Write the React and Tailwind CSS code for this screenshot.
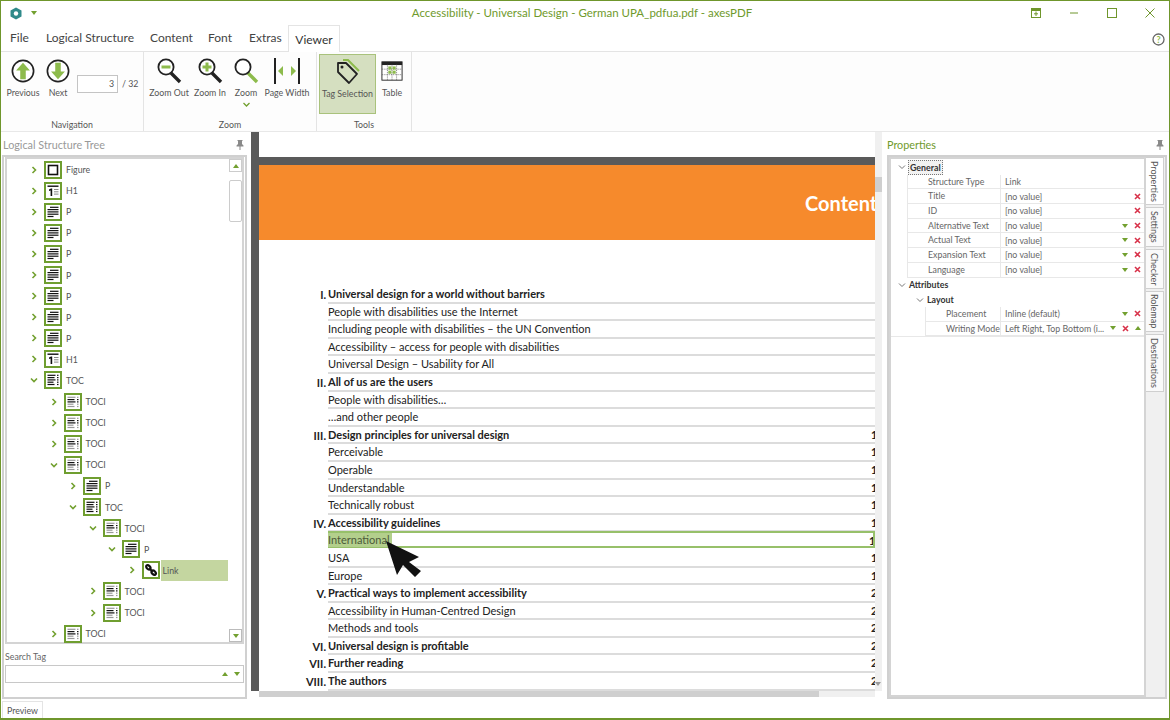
import React from 'react';

const GREEN = '#72a02f';

const treeRows = [
  [0, 'c', 'figure', 'Figure'],
  [0, 'c', 'h1', 'H1'],
  [0, 'c', 'p', 'P'],
  [0, 'c', 'p', 'P'],
  [0, 'c', 'p', 'P'],
  [0, 'c', 'p', 'P'],
  [0, 'c', 'p', 'P'],
  [0, 'c', 'p', 'P'],
  [0, 'c', 'p', 'P'],
  [0, 'c', 'h1', 'H1'],
  [0, 'o', 'toc', 'TOC'],
  [1, 'c', 'toci', 'TOCI'],
  [1, 'c', 'toci', 'TOCI'],
  [1, 'c', 'toci', 'TOCI'],
  [1, 'o', 'toci', 'TOCI'],
  [2, 'c', 'p', 'P'],
  [2, 'o', 'toc', 'TOC'],
  [3, 'o', 'toci', 'TOCI'],
  [4, 'o', 'p', 'P'],
  [5, 'c', 'link', 'Link', true],
  [3, 'c', 'toci', 'TOCI'],
  [3, 'c', 'toci', 'TOCI'],
  [1, 'c', 'toci', 'TOCI'],
];

const docRows = [
  ['I.', 'Universal design for a world without barriers', ''],
  ['', 'People with disabilities use the Internet', ''],
  ['', 'Including people with disabilities – the UN Convention', ''],
  ['', 'Accessibility – access for people with disabilities', ''],
  ['', 'Universal Design – Usability for All', ''],
  ['II.', 'All of us are the users', ''],
  ['', 'People with disabilities…', ''],
  ['', '…and other people', ''],
  ['III.', 'Design principles for universal design', '13'],
  ['', 'Perceivable', '13'],
  ['', 'Operable', '14'],
  ['', 'Understandable', '14'],
  ['', 'Technically robust', '15'],
  ['IV.', 'Accessibility guidelines', '16'],
  ['', 'International', '16', true],
  ['', 'USA', '17'],
  ['', 'Europe', '17'],
  ['V.', 'Practical ways to implement accessibility', '21'],
  ['', 'Accessibility in Human-Centred Design', '21'],
  ['', 'Methods and tools', '22'],
  ['VI.', 'Universal design is profitable', '25'],
  ['VII.', 'Further reading', '26'],
  ['VIII.', 'The authors', '28'],
];

const sideTabs = [
  ['Properties', 'h-[48px]'],
  ['Settings', 'h-[40px]'],
  ['Checker', 'h-[40px]'],
  ['Rolemap', 'h-[41px]'],
  ['Destinations', 'h-[58px]'],
];

function Chevron({ open }) {
  return (
    <svg width="8" height="8" viewBox="0 0 8 8" fill="none" stroke={GREEN} strokeWidth="1.6">
      {open ? <path d="M1 2.5 4 5.5 7 2.5" /> : <path d="M2.5 1 5.5 4 2.5 7" />}
    </svg>
  );
}

function Lines({ rows }) {
  return rows.map((r, i) => <rect key={i} x={r[0]} y={r[1]} width={r[2]} height={r[3] || 1.2} fill={r[4] || '#111'} />);
}

function TagIcon({ type }) {
  return (
    <svg width="18" height="18" viewBox="0 0 18 18" className="shrink-0">
      <rect x="1" y="1" width="16" height="16" fill="#fff" stroke="#6f9e30" strokeWidth="2" />
      {type === 'figure' && <rect x="4.5" y="4.5" width="9" height="9" fill="none" stroke="#111" strokeWidth="1.6" />}
      {type === 'h1' && (
        <>
          <rect x="3.5" y="3.5" width="11" height="1.4" fill="#111" />
          <path d="M5 7.5 7 6.5H8.2V14H6.6V8.4L5 9Z" fill="#111" />
          <Lines rows={[[10, 7, 4.5, 1, '#888'], [10, 9.3, 4.5, 1, '#888'], [10, 11.6, 4.5, 1, '#888']]} />
        </>
      )}
      {type === 'p' && <Lines rows={[[6, 3.7, 8.5], [3.5, 6, 11], [3.5, 8.3, 11], [3.5, 10.6, 11], [3.5, 12.9, 6]]} />}
      {type === 'toc' && (
        <Lines rows={[[3.5, 3.7, 8], [3.5, 6, 7], [3.5, 8.3, 8], [3.5, 10.6, 6], [3.5, 12.9, 7], [13, 3.7, 1.5], [13, 6, 1.5], [13, 8.3, 1.5], [13, 10.6, 1.5], [13, 12.9, 1.5]]} />
      )}
      {type === 'toci' && (
        <Lines rows={[[3.5, 3.7, 8, 1.2, '#999'], [3.5, 6, 7], [3.5, 8.3, 8], [3.5, 10.6, 6, 1.2, '#999'], [3.5, 12.9, 7, 1.2, '#999'], [13, 3.7, 1.5, 1.2, '#999'], [13, 6, 1.5], [13, 8.3, 1.5], [13, 10.6, 1.5, 1.2, '#999'], [13, 12.9, 1.5, 1.2, '#999']]} />
      )}
      {type === 'link' && (
        <g fill="none" stroke="#111" strokeWidth="2.2">
          <ellipse cx="6.3" cy="6.3" rx="2.5" ry="1.7" transform="rotate(45 6.3 6.3)" />
          <ellipse cx="11.7" cy="11.7" rx="2.5" ry="1.7" transform="rotate(45 11.7 11.7)" />
          <path d="M7.5 7.5 10.5 10.5" />
        </g>
      )}
    </svg>
  );
}

function Pin() {
  return (
    <svg width="8" height="10" viewBox="0 0 8 10" fill="#8a8a8a">
      <path d="M1.5 0h5v1H6v3l1.5 1.5V6.5H4.5V10h-1V6.5H.5v-1L2 4V1h-.5z" />
    </svg>
  );
}

function Tri({ up, color = GREEN }) {
  return (
    <svg width="6" height="4" viewBox="0 0 6 4" fill={color}>
      {up ? <path d="M0 4 3 0 6 4Z" /> : <path d="M0 0H6L3 4Z" />}
    </svg>
  );
}

function RedX() {
  return (
    <svg width="7" height="7" viewBox="0 0 7 7" stroke="#d8324a" strokeWidth="1.6">
      <path d="M1 1 6 6M6 1 1 6" />
    </svg>
  );
}

function CircleArrow({ down }) {
  return (
    <svg width="24" height="24" viewBox="0 0 26 26">
      <circle cx="13" cy="13" r="11.5" fill="#fff" stroke="#222" strokeWidth="1.8" />
      <g transform={down ? 'rotate(180 13 13)' : undefined} fill="#8dbb4c">
        <path d="M13 4 20.5 12.5H16V22H10V12.5H5.5Z" />
      </g>
    </svg>
  );
}

function Lens({ kind }) {
  return (
    <svg width="30" height="30" viewBox="0 0 30 30">
      <path d="M17 17 26 26" stroke={kind === 'plain' ? '#8dbb4c' : '#222'} strokeWidth="3.4" />
      <circle cx="12" cy="11" r="7.6" fill="#fff" stroke="#222" strokeWidth="1.8" />
      {kind !== 'plain' && <rect x="7.5" y="9.5" width="9" height="3" fill="#8dbb4c" />}
      {kind === 'plus' && <rect x="10.5" y="6.5" width="3" height="9" fill="#8dbb4c" />}
    </svg>
  );
}

function PageWidthIcon() {
  return (
    <svg width="30" height="28" viewBox="0 0 30 28">
      <rect x="2" y="1" width="2" height="26" fill="#222" />
      <rect x="26" y="1" width="2" height="26" fill="#222" />
      <path d="M6 14 11 9V19Z" fill="#8dbb4c" />
      <path d="M24 14 19 9V19Z" fill="#8dbb4c" />
    </svg>
  );
}

function TagSelIcon() {
  return (
    <svg width="26" height="28" viewBox="0 0 26 28">
      <path d="M8 2H13L24 13" fill="none" stroke="#8dbb4c" strokeWidth="2" />
      <path d="M3 5H11L22 16 14 25 3 14Z" fill="#d5dfc0" stroke="#222" strokeWidth="1.8" strokeLinejoin="round" />
      <circle cx="7" cy="9" r="1.5" fill="#222" />
    </svg>
  );
}

function TableIcon() {
  return (
    <svg width="22" height="22" viewBox="0 0 24 24">
      <rect x="1" y="2" width="22" height="20" fill="#fff" stroke="#222" strokeWidth="1" />
      <rect x="1" y="2" width="22" height="3.5" fill="#222" />
      <path d="M1 10H23M1 16H23M7 5V22M12 5V22M17 5V22" stroke="#555" strokeWidth=".8" strokeDasharray="1 1" />
      <rect x="8" y="7" width="3.4" height="3.4" fill="#8dbb4c" />
      <rect x="12.6" y="7" width="3.4" height="3.4" fill="#8dbb4c" />
      <rect x="8" y="11.6" width="3.4" height="3.4" fill="#8dbb4c" />
      <rect x="12.6" y="11.6" width="3.4" height="3.4" fill="#8dbb4c" />
    </svg>
  );
}

function RibbonButton({ icon, label, className, children }) {
  return (
    <div className={`flex flex-col items-center shrink-0 ${className}`}>
      <div className="h-[33px] flex items-center justify-center">{icon}</div>
      <div className="text-[8.8px] leading-[12px] text-[#555] whitespace-nowrap">{label}</div>
      {children}
    </div>
  );
}

function RibbonGroup({ label, width, children }) {
  return (
    <div className={`flex flex-col h-full border-r border-[#e4e4e4] ${width}`}>
      <div className="flex flex-1 pt-[2px]">{children}</div>
      <div className="h-[12px] text-center text-[8.8px] leading-[12px] text-[#555]">{label}</div>
    </div>
  );
}

function PropRow({ label, value, sub, down, x = true, writing }) {
  return (
    <div className={`flex h-[14.7px] items-center ${sub ? 'pl-[34px]' : 'pl-[16px]'}`}>
      <div className="flex flex-1 min-w-0 h-full items-center border-l border-b border-[#e8e8e8]">
        <div className={`h-full shrink-0 pl-[20px] border-r border-[#e8e8e8] leading-[13px] whitespace-nowrap ${sub ? 'w-[75px]' : 'w-[93px]'}`}>{label}</div>
        <div className="flex-1 min-w-0 pl-[4px] leading-[13px] whitespace-nowrap">{value}</div>
        <div className="flex items-center gap-[6px] pr-[3px]">
          {down && <Tri />}
          {x && <RedX />}
          {writing && <Tri up />}
        </div>
      </div>
    </div>
  );
}

function PropHead({ label, sub, focus }) {
  return (
    <div className={`flex h-[14.7px] items-center ${sub ? 'pl-[25px]' : 'pl-[7px]'}`}>
      <svg width="8" height="8" viewBox="0 0 8 8" fill="none" stroke="#777" strokeWidth="1"><path d="M1 2.5 4 5.5 7 2.5" /></svg>
      <span className={`ml-[2px] px-[1px] font-bold leading-[13px] text-[#333] ${focus ? 'border border-dotted border-[#777] bg-[#f2f2f2]' : ''}`}>{label}</span>
    </div>
  );
}

export default function App() {
  return (
    <div className="relative flex flex-col w-[1170px] h-[720px] overflow-hidden bg-white border border-b-2 border-[#6f962c] font-['Lato',sans-serif]">
      {/* title bar */}
      <div className="flex items-center h-[24px] shrink-0">
        <div className="flex items-center w-[60px] pl-[9px] gap-[9px]">
          <svg width="12" height="13" viewBox="0 0 12 13">
            <path d="M6 .5 11.5 3.5V9.5L6 12.5.5 9.5V3.5Z" fill="#2f8a8a" />
            <circle cx="6" cy="6.5" r="2.2" fill="#fff" />
          </svg>
          <Tri />
        </div>
        <div className="flex-1 pl-[86px] text-center text-[11.5px] text-[#6f9a2c] whitespace-nowrap">Accessibility - Universal Design - German UPA_pdfua.pdf - axesPDF</div>
        <div className="flex items-center w-[152px] h-full">
          <div className="w-[38px] flex justify-center">
            <svg width="10" height="10" viewBox="0 0 10 10" fill="none" stroke="#6f962c"><rect x=".5" y=".5" width="9" height="9" /><rect x="0" y="0" width="10" height="2.5" fill="#6f962c" /><path d="M5 3.5V8M3 5.8H7" /></svg>
          </div>
          <div className="w-[38px] flex justify-center">
            <svg width="10" height="10" viewBox="0 0 10 10" stroke="#6f962c"><path d="M1 5H9" /></svg>
          </div>
          <div className="w-[38px] flex justify-center">
            <svg width="10" height="10" viewBox="0 0 10 10" fill="none" stroke="#6f962c"><rect x=".5" y=".5" width="9" height="9" /></svg>
          </div>
          <div className="w-[38px] flex justify-center">
            <svg width="10" height="10" viewBox="0 0 10 10" stroke="#6f962c"><path d="M.5.5 9.5 9.5M9.5.5.5 9.5" /></svg>
          </div>
        </div>
      </div>

      {/* tabs */}
      <div className="flex items-end h-[27px] shrink-0 border-b border-[#e4e4e4] text-[12px] text-[#444]">
        <div className="pl-[9px] w-[45px] pb-[4px]">File</div>
        <div className="w-[104px] pb-[4px]">Logical Structure</div>
        <div className="w-[58px] pb-[4px]">Content</div>
        <div className="w-[41px] pb-[4px]">Font</div>
        <div className="w-[39px] pb-[4px]">Extras</div>
        <div className="w-[52px] h-[27px] mb-[-1px] pt-[5px] text-center bg-white border border-b-0 border-[#e4e4e4] text-[#333]">Viewer</div>
        <div className="flex-1 flex justify-end pr-[4px] pb-[5px]">
          <svg width="13" height="13" viewBox="0 0 13 13">
            <circle cx="6.5" cy="6.5" r="5.5" fill="#fff" stroke="#666" strokeWidth="1.3" />
            <text x="6.5" y="9.8" textAnchor="middle" fontSize="9" fontWeight="700" fill="#8dbb4c">?</text>
          </svg>
        </div>
      </div>

      {/* ribbon */}
      <div className="flex h-[80px] shrink-0 border-b border-[#e8e8e8] bg-[#fdfdfd]">
        <RibbonGroup label="Navigation" width="w-[143px]">
          <RibbonButton className="w-[44px]" icon={<CircleArrow />} label="Previous" />
          <RibbonButton className="w-[26px]" icon={<CircleArrow down />} label="Next" />
          <div className="flex items-center h-[20px] mt-[20px] ml-[6px] text-[8.8px] text-[#555]">
            <div className="w-[41px] h-[18px] border border-[#c4c4c4] bg-white text-right pr-[3px] leading-[16px]">3</div>
            <span className="ml-[4px] whitespace-nowrap">/ 32</span>
          </div>
        </RibbonGroup>
        <RibbonGroup label="Zoom" width="w-[173px]">
          <RibbonButton className="w-[50px]" icon={<Lens kind="minus" />} label="Zoom Out" />
          <RibbonButton className="w-[32px]" icon={<Lens kind="plus" />} label="Zoom In" />
          <RibbonButton className="w-[40px]" icon={<Lens kind="plain" />} label="Zoom">
            <svg width="7" height="5" viewBox="0 0 7 5" fill="none" stroke={GREEN} strokeWidth="1.3" className="mt-[3px]"><path d="M.5 1 3.5 4 6.5 1" /></svg>
          </RibbonButton>
          <RibbonButton className="w-[42px]" icon={<PageWidthIcon />} label="Page Width" />
        </RibbonGroup>
        <RibbonGroup label="Tools" width="w-[95px]">
          <div className="ml-[2px] w-[57px] h-[60px] bg-[#d5dfc0] border border-[#a9c27c]">
            <RibbonButton className="w-full" icon={<TagSelIcon />} label="Tag Selection" />
          </div>
          <RibbonButton className="w-[32px]" icon={<TableIcon />} label="Table" />
        </RibbonGroup>
      </div>

      {/* main */}
      <div className="flex flex-1 min-h-0">
        {/* logical structure tree */}
        <div className="flex flex-col w-[248px] shrink-0 pl-[1px] pr-[2px]">
          <div className="flex items-center justify-between h-[23px] pt-[3px] pl-[1px] pr-[3px] text-[10.8px] text-[#999]">
            <span>Logical Structure Tree</span>
            <Pin />
          </div>
          <div className="flex flex-col flex-1 border-2 border-[#d0d0d0] px-[1px]">
            <div className="flex h-[487px] shrink-0 border-2 border-[#d4d4d4]">
              <div className="flex-1 text-[8.8px] text-[#555]">
                {treeRows.map((r, i) => (
                  <div key={i} className="flex items-center h-[21.1px]" style={{ paddingLeft: 23 + r[0] * 19.5 }}>
                    <div className="w-[12px] flex shrink-0"><Chevron open={r[1] === 'o'} /></div>
                    <div className="ml-[2px]"><TagIcon type={r[2]} /></div>
                    <div className={`ml-[1px] h-[21px] leading-[21px] ${r[4] ? 'w-[67px] pl-[2px] bg-[#c4d6a0]' : 'pl-[3px]'}`}>{r[3]}</div>
                  </div>
                ))}
              </div>
              <div className="flex flex-col justify-between w-[13px] shrink-0">
                <div>
                  <div className="flex items-center justify-center h-[13px] border border-[#ccc] bg-white"><Tri up /></div>
                  <div className="h-[42px] mt-[8px] border border-[#ccc] rounded-[2px] bg-white" />
                </div>
                <div className="flex items-center justify-center h-[13px] border border-[#bbb] bg-white"><Tri /></div>
              </div>
            </div>
            <div className="mt-[6px] text-[8.8px] leading-[13px] text-[#666]">Search Tag</div>
            <div className="flex items-center justify-end gap-[6px] h-[18px] mt-[2px] pr-[3px] border border-[#c8c8c8]">
              <Tri up />
              <Tri />
            </div>
          </div>
        </div>

        {/* document viewer */}
        <div className="flex flex-col w-[633px] shrink-0 pb-[2px]">
          <div className="flex flex-1 min-h-0">
            <div className="w-[8px] ml-[2px] bg-[#5a5a5a] shrink-0" />
            <div className="flex flex-col flex-1 min-w-0 overflow-hidden text-[11px] text-[#222]">
              <div className="h-[25px] shrink-0" />
              <div className="h-[8px] shrink-0 bg-[#5a5a5a]" />
              <div className="h-[75px] shrink-0 bg-[#f68a2c] pl-[546px] flex items-center text-[20px] font-bold text-white whitespace-nowrap overflow-hidden">Contents</div>
              <div className="pt-[46px]">
                {docRows.map((r, i) => (
                  <div key={i} className="flex h-[17.6px]">
                    <div className="w-[69px] pr-[2px] shrink-0 text-right font-bold leading-[17px]">{r[0]}</div>
                    <div className={`flex flex-1 min-w-0 ${r[3] ? 'border-2 border-[#97c06a] h-[17px] mt-[-1px]' : 'border-b-2 border-[#dcdcdc]'}`}>
                      <div className={`flex-1 min-w-0 whitespace-nowrap ${r[3] ? 'leading-[14px]' : 'leading-[16px]'} ${r[0] ? 'font-bold' : ''}`}>
                        <span className={r[3] ? 'inline-block w-[64px] ml-[-2px] bg-[#b3cf8c] text-[#4d5a3a]' : ''}>{r[1]}</span>
                      </div>
                      <div className="w-[4px] overflow-hidden leading-[16px] font-bold">{r[2]}</div>
                    </div>
                  </div>
                ))}
              </div>
            </div>
            <div className="flex flex-col justify-between w-[7px] shrink-0 bg-[#f0f0f0] pt-[45px] pb-[5px]">
              <div className="h-[15px] bg-[#cfcfcf]" />
              <Tri color="#999" />
            </div>
          </div>
          <div className="flex h-[6px] shrink-0 ml-[10px] mr-[7px] bg-[#f0f0f0]">
            <div className="w-[560px] bg-[#cfcfcf]" />
          </div>
        </div>

        {/* properties */}
        <div className="flex flex-col flex-1 min-w-0 pl-[5px] pr-[2px]">
          <div className="flex items-center justify-between h-[23px] pt-[3px] pr-[3px] text-[10.8px] text-[#6f9a2c]">
            <span>Properties</span>
            <Pin />
          </div>
          <div className="flex flex-1 min-h-0 border-2 border-[#d0d0d0]">
            <div className="flex-1 min-w-0 overflow-hidden border-2 border-[#d4d4d4] pt-[1px] text-[8.8px] text-[#666]">
              <PropHead label="General" focus />
              <PropRow label="Structure Type" value="Link" x={false} />
              <PropRow label="Title" value="[no value]" />
              <PropRow label="ID" value="[no value]" />
              <PropRow label="Alternative Text" value="[no value]" down />
              <PropRow label="Actual Text" value="[no value]" down />
              <PropRow label="Expansion Text" value="[no value]" down />
              <PropRow label="Language" value="[no value]" down />
              <PropHead label="Attributes" />
              <PropHead label="Layout" sub />
              <PropRow label="Placement" value="Inline (default)" sub down />
              <PropRow label="Writing Mode" value="Left Right, Top Bottom (i..." sub down writing />
              <div className="border-t border-[#e8e8e8]" />
            </div>
            <div className="flex flex-col gap-[2px] w-[19px] shrink-0 bg-[#f0f0f0] text-[9px] text-[#555]">
              {sideTabs.map(([t, h], i) => (
                <div key={t} className={`flex items-center justify-center w-[18px] border border-l-0 border-[#cfcfcf] ${h} ${i === 0 ? 'bg-white' : 'bg-[#fafafa]'}`}>
                  <span className="[writing-mode:vertical-rl] whitespace-nowrap">{t}</span>
                </div>
              ))}
            </div>
          </div>
        </div>
      </div>

      {/* status bar */}
      <div className="flex h-[19px] shrink-0 pt-[2px]">
        <div className="w-[41px] ml-[1px] h-[17px] border border-b-0 border-[#e4e4e4] text-center text-[8.8px] leading-[17px] text-[#555]">Preview</div>
      </div>

      {/* mouse pointer over the document */}
      <svg className="absolute left-[383px] top-[539px]" width="38" height="38" viewBox="0 0 38 38">
        <path d="M2 1 35 17 25 22 37 31 31 37 19 25 13 35Z" fill="#111" />
      </svg>
    </div>
  );
}
